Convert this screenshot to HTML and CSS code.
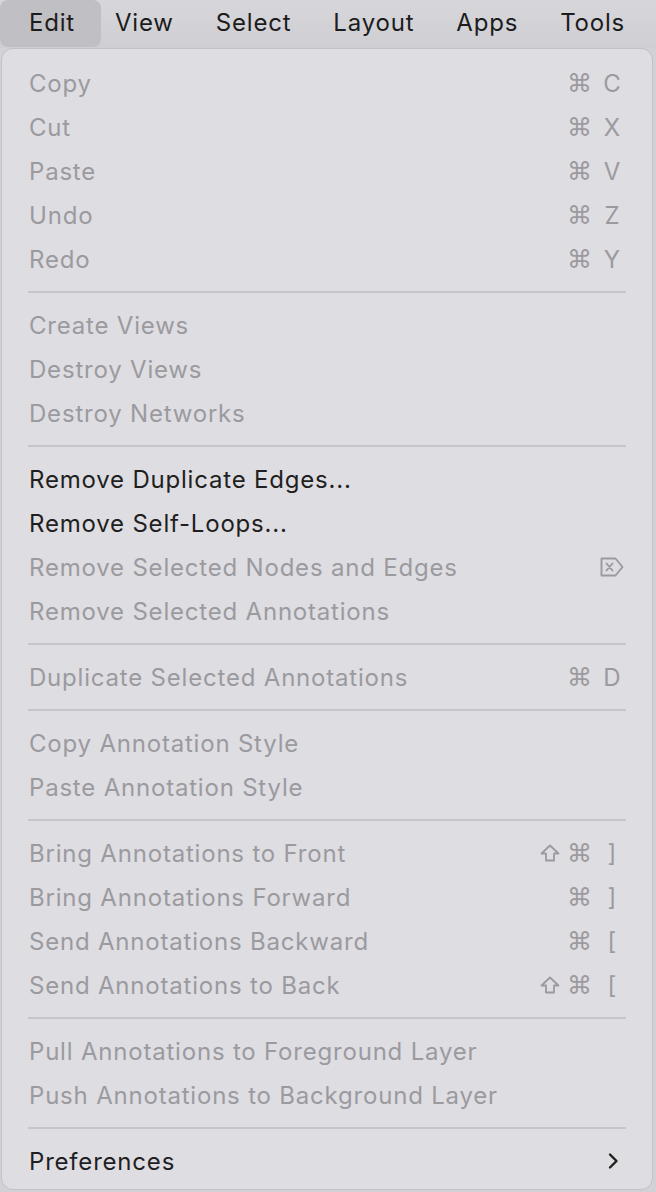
FILE: index.html
```html
<!DOCTYPE html>
<html>
<head>
<meta charset="utf-8">
<link rel="stylesheet" href="styles.css">
</head>
<body>
<div class="menubar">
  <span class="mb-item active">Edit</span>
  <span class="mb-item">View</span>
  <span class="mb-item">Select</span>
  <span class="mb-item">Layout</span>
  <span class="mb-item">Apps</span>
  <span class="mb-item">Tools</span>
</div>
<div class="panel">
  <div class="row dis"><span class="label">Copy</span><span class="sc"><span class="mod">⌘</span><span class="key">C</span></span></div>
  <div class="row dis"><span class="label">Cut</span><span class="sc"><span class="mod">⌘</span><span class="key">X</span></span></div>
  <div class="row dis"><span class="label">Paste</span><span class="sc"><span class="mod">⌘</span><span class="key">V</span></span></div>
  <div class="row dis"><span class="label">Undo</span><span class="sc"><span class="mod">⌘</span><span class="key">Z</span></span></div>
  <div class="row dis"><span class="label">Redo</span><span class="sc"><span class="mod">⌘</span><span class="key">Y</span></span></div>
  <div class="sep"></div>
  <div class="row dis"><span class="label">Create Views</span></div>
  <div class="row dis"><span class="label">Destroy Views</span></div>
  <div class="row dis"><span class="label">Destroy Networks</span></div>
  <div class="sep"></div>
  <div class="row"><span class="label">Remove Duplicate Edges...</span></div>
  <div class="row"><span class="label">Remove Self-Loops...</span></div>
  <div class="row dis"><span class="label">Remove Selected Nodes and Edges</span>
    <svg class="del" width="24" height="20" viewBox="0 0 24 20"><path d="M1.5 1.5 H15.5 L22.5 10 L15.5 18.5 H1.5 Z" fill="none" stroke="currentColor" stroke-width="1.9" stroke-linejoin="round"/><path d="M6.5 6.5 L12.5 13.5 M12.5 6.5 L6.5 13.5" stroke="currentColor" stroke-width="1.9" stroke-linecap="round"/></svg>
  </div>
  <div class="row dis"><span class="label">Remove Selected Annotations</span></div>
  <div class="sep"></div>
  <div class="row dis"><span class="label">Duplicate Selected Annotations</span><span class="sc"><span class="mod">⌘</span><span class="key">D</span></span></div>
  <div class="sep"></div>
  <div class="row dis"><span class="label">Copy Annotation Style</span></div>
  <div class="row dis"><span class="label">Paste Annotation Style</span></div>
  <div class="sep"></div>
  <div class="row dis"><span class="label">Bring Annotations to Front</span><span class="sc"><svg class="shift" width="20" height="18" viewBox="0 0 20 18"><path d="M10 1.5 L18.5 9.5 H14 V16.5 H6 V9.5 H1.5 Z" fill="none" stroke="currentColor" stroke-width="1.8" stroke-linejoin="round"/></svg><span class="mod">⌘</span><span class="key">]</span></span></div>
  <div class="row dis"><span class="label">Bring Annotations Forward</span><span class="sc"><span class="mod">⌘</span><span class="key">]</span></span></div>
  <div class="row dis"><span class="label">Send Annotations Backward</span><span class="sc"><span class="mod">⌘</span><span class="key">[</span></span></div>
  <div class="row dis"><span class="label">Send Annotations to Back</span><span class="sc"><svg class="shift" width="20" height="18" viewBox="0 0 20 18"><path d="M10 1.5 L18.5 9.5 H14 V16.5 H6 V9.5 H1.5 Z" fill="none" stroke="currentColor" stroke-width="1.8" stroke-linejoin="round"/></svg><span class="mod">⌘</span><span class="key">[</span></span></div>
  <div class="sep"></div>
  <div class="row dis"><span class="label">Pull Annotations to Foreground Layer</span></div>
  <div class="row dis"><span class="label">Push Annotations to Background Layer</span></div>
  <div class="sep"></div>
  <div class="row"><span class="label">Preferences</span>
    <svg class="chev" width="14" height="18" viewBox="0 0 14 18"><path d="M4 2.5 L10.5 9 L4 15.5" fill="none" stroke="currentColor" stroke-width="2.4" stroke-linecap="round" stroke-linejoin="round"/></svg>
  </div>
</div>
</body>
</html>
```
FILE: styles.css
```css
html, body {
  margin: 0;
  padding: 0;
}
body {
  width: 656px;
  height: 1192px;
  overflow: hidden;
  background: #d2d1d6;
  font-family: Inter, "Noto Sans", sans-serif;
  font-size: 24px;
  letter-spacing: 0.8px;
  color: #1e1e1e;
}
.menubar {
  height: 48px;
  display: flex;
  align-items: stretch;
  background: linear-gradient(#d7d6db, #cfced3);
}
.mb-item {
  display: flex;
  align-items: center;
  padding: 0 21px;
  padding-bottom: 3px;
  color: #1c1c1c;
}
.mb-item.active {
  padding-left: 29px;
  padding-right: 26px;
  margin-right: -7px;
  margin-bottom: 1px;
  background: #c0bfc4;
  border-radius: 8px;
}
.panel {
  margin-left: 1px;
  width: 652px;
  height: 1142px;
  box-sizing: border-box;
  background: #dedde2;
  border: 1px solid #c2c1c6;
  border-radius: 12px;
  padding: 12px 0 6px;
}
.row {
  height: 44px;
  display: flex;
  align-items: center;
  justify-content: space-between;
  padding: 0 30px 0 27px;
  color: #1f1f1f;
}
.row.dis {
  color: #9b9a9f;
}
.label {
  white-space: nowrap;
}
.sc {
  display: flex;
  align-items: center;
}
.shift {
  display: block;
  margin-right: 7px;
}
.mod {
  font-family: "DejaVu Sans", sans-serif;
  font-size: 25px;
  letter-spacing: 0;
}
.key {
  width: 20px;
  margin-left: 10px;
  text-align: center;
  letter-spacing: 0;
}
.del {
  display: block;
  margin-right: -2px;
}
.chev {
  display: block;
  margin-right: 2px;
  color: #1f1f1f;
}
.sep {
  height: 22px;
  display: flex;
  align-items: center;
  padding: 0 26px 0 26px;
}
.sep::before {
  content: "";
  flex: 1;
  height: 2px;
  background: #c6c5ca;
}
```
